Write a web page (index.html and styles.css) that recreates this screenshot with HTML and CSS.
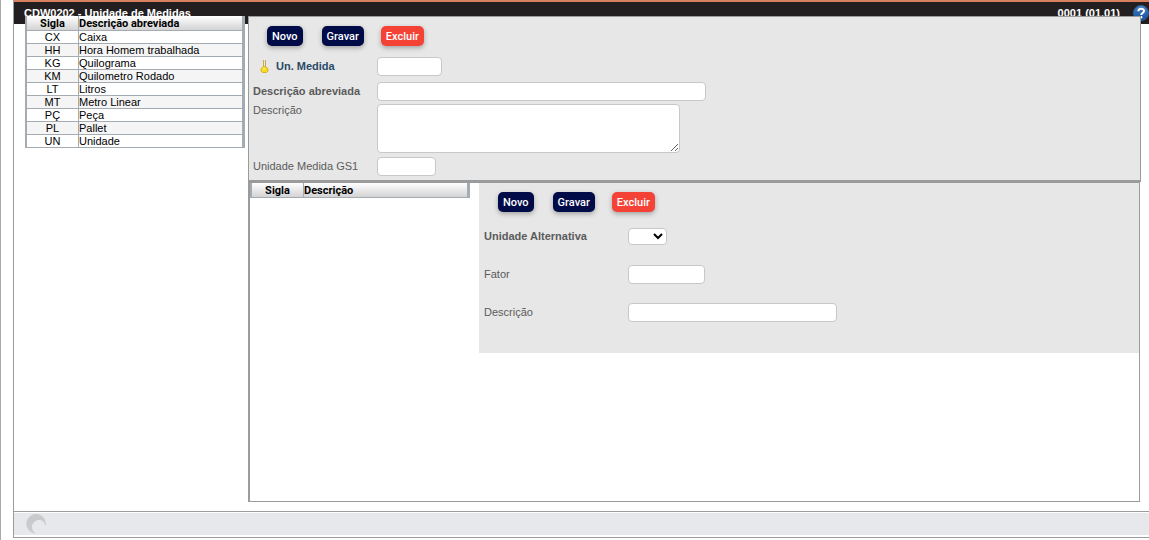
FILE: index.html
```html
<!doctype html>
<html lang="pt-BR">
<head>
  <meta charset="UTF-8">
  <meta name="viewport" content="width=device-width, initial-scale=1.0">
  <title>CDW0202 - Unidade de Medidas</title>
  <link rel="stylesheet" href="styles.css">
</head>
<body>
  <div class="window">
    <header class="titlebar">
      <h1>CDW0202 - Unidade de Medidas</h1>
      <span class="version">0001 (01.01)</span>
      <button type="button" class="help" aria-label="Ajuda">
        <svg width="16" height="16" viewBox="0 0 16 16">
          <defs>
            <linearGradient id="helpfill" x1="0" y1="0" x2="0" y2="1">
              <stop offset="0" stop-color="#4a83c4"/>
              <stop offset="1" stop-color="#0f4c9a"/>
            </linearGradient>
          </defs>
          <circle cx="8" cy="8" r="7.5" fill="url(#helpfill)" stroke="#2c62a3"/>
          <path d="M5.4 6.2C5.2 3 11 2.8 11 6C11 8 8.2 8 8.2 10" fill="none" stroke="#fff" stroke-width="2"/>
          <circle cx="8.2" cy="12.3" r="1.2" fill="#fff"/>
        </svg>
      </button>
    </header>

    <main class="content">
      <table class="grid">
        <thead>
          <tr><th class="sigla">Sigla</th><th>Descrição abreviada</th></tr>
        </thead>
        <tbody>
          <tr><td class="sigla">CX</td><td>Caixa</td></tr>
          <tr><td class="sigla">HH</td><td>Hora Homem trabalhada</td></tr>
          <tr><td class="sigla">KG</td><td>Quilograma</td></tr>
          <tr><td class="sigla">KM</td><td>Quilometro Rodado</td></tr>
          <tr><td class="sigla">LT</td><td>Litros</td></tr>
          <tr><td class="sigla">MT</td><td>Metro Linear</td></tr>
          <tr><td class="sigla">PÇ</td><td>Peça</td></tr>
          <tr><td class="sigla">PL</td><td>Pallet</td></tr>
          <tr><td class="sigla">UN</td><td>Unidade</td></tr>
        </tbody>
      </table>

      <div class="panels">
        <form class="unit-form">
          <div class="buttons">
            <button type="button" class="btn">Novo</button>
            <button type="button" class="btn">Gravar</button>
            <button type="button" class="btn btn-delete">Excluir</button>
          </div>
          <div class="row row-key">
            <label for="un" class="key">
              <svg width="11" height="15" viewBox="0 0 11 15">
                <path d="M4.5 1V8M6.5 1V8" stroke="#c9a94a" stroke-width="1"/>
                <path d="M4 7.5H7L9 10V12L7.5 13.5H3.5L2 12V10Z" fill="#f6dc1e" stroke="#d6b12c"/>
                <path d="M4 10H6" stroke="#fff8a0"/>
              </svg>
              Un. Medida
            </label>
            <input type="text" id="un" class="w-un">
          </div>
          <div class="row row-abbr">
            <label for="abrev" class="required">Descrição abreviada</label>
            <input type="text" id="abrev" class="w-abrev">
          </div>
          <div class="row row-text">
            <label for="desc">Descrição</label>
            <textarea id="desc"></textarea>
          </div>
          <div class="row">
            <label for="gs1">Unidade Medida GS1</label>
            <input type="text" id="gs1" class="w-gs1">
          </div>
        </form>

        <section class="alternatives">
          <table class="grid">
            <thead>
              <tr><th class="sigla">Sigla</th><th>Descrição</th></tr>
            </thead>
          </table>
          <form class="alt-form">
            <div class="buttons">
              <button type="button" class="btn">Novo</button>
              <button type="button" class="btn">Gravar</button>
              <button type="button" class="btn btn-delete">Excluir</button>
            </div>
            <div class="row">
              <label for="alt" class="required">Unidade Alternativa</label>
              <select id="alt"><option></option></select>
            </div>
            <div class="row">
              <label for="fator">Fator</label>
              <input type="text" id="fator" class="w-fator">
            </div>
            <div class="row">
              <label for="altdesc">Descrição</label>
              <input type="text" id="altdesc" class="w-altdesc">
            </div>
          </form>
        </section>
      </div>
    </main>

    <footer class="status">
      <svg width="20" height="20" viewBox="0 0 20 20">
        <path d="M10 19.5A9.7 9.7 0 1 1 19.5 12C18 5.5 12.500 5 9 7.500C4.500 10.500 5 16.500 10 19.500Z" fill="#c9cacc"/>
      </svg>
    </footer>
  </div>
</body>
</html>
```

FILE: styles.css
```css
* {
  box-sizing: border-box;
}
body {
  margin: 0;
  min-height: 100vh;
  display: flex;
  padding: 0 0 2px 12px;
  border-left: 1px solid #aaa;
  background: #fff;
  font-family: "Liberation Sans", Arial, sans-serif;
  font-size: 11px;
  color: #000;
}
.window {
  flex: 1;
  display: flex;
  flex-direction: column;
  border-left: 1px solid #9b9c9d;
  border-bottom: 1px solid #9b9c9d;
}
.titlebar {
  display: flex;
  align-items: center;
  height: 24px;
  padding-left: 10px;
  border-top: 2px solid #d9805f;
  background: #231f20;
  color: #fff;
  font-weight: bold;
}
.titlebar h1 {
  flex: 1;
  margin: 0;
  font-size: 11px;
}
.help {
  display: flex;
  margin-left: 13px;
  padding: 0;
  border: 0;
  background: none;
}
/* the content area rides up over the title bar */
.content {
  position: relative;
  z-index: 1;
  flex: 1;
  display: flex;
  align-items: flex-start;
  gap: 3px;
  margin-top: -8px;
  padding: 0 8px 9px 11px;
}

/* data grids */
.grid {
  flex: none;
  width: 220px;
  table-layout: fixed;
  border-collapse: separate;
  border-spacing: 0;
  border: solid #a5acb1;
  border-width: 0 3px 0 2px;
  background: #fff;
}
.grid th,
.grid td {
  height: 13px;
  padding: 0;
  border-bottom: 1px solid #a5acb1;
  line-height: 12px;
  text-align: left;
}
.grid th {
  height: 15px;
  padding-top: 1px;
  line-height: 13px;
  font-family: Roboto, sans-serif;
  background: linear-gradient(#fff, #d3d3d3);
}
.grid .sigla {
  width: 52px;
  border-right: 1px solid #a5acb1;
  text-align: center;
}
.grid tbody tr:nth-child(even) {
  background: #f5f5f5;
}

/* forms */
.panels {
  flex: 1;
  align-self: stretch;
  display: flex;
  flex-direction: column;
}
.unit-form {
  padding: 9px 4px 4px;
  border: 1px solid #999b9d;
  border-bottom-width: 2px;
  background: #e7e7e7;
}
.buttons {
  display: flex;
  padding-left: 14px;
}
.btn {
  height: 20px;
  margin-right: 19px;
  padding: 0 5px;
  border: 0;
  border-radius: 5px;
  background: #000b48;
  box-shadow: 0 2px 5px rgba(0, 0, 0, 0.3);
  color: #fff;
  font: 500 11px Roboto, Arial, sans-serif;
}
.btn:nth-child(2) {
  margin-right: 17px;
}
.btn-delete {
  background: #f44336;
}
.row {
  display: flex;
  align-items: flex-start;
}
.row label {
  flex: none;
  width: 124px;
  line-height: 19px;
  color: #5b5b5b;
}
.row .required {
  font-weight: bold;
}
.row .key {
  display: flex;
  align-items: center;
  gap: 6px;
  padding-left: 6px;
  color: #2a4a66;
  font-weight: bold;
}
.row-key {
  height: 25px;
  margin-top: 11px;
}
.row-abbr {
  height: 22px;
}
.row-text {
  height: 53px;
}
.row-text label {
  line-height: 13px;
}
input,
textarea,
select {
  height: 19px;
  margin: 0;
  padding: 0 4px;
  border: 1px solid #c8c8c8;
  border-radius: 4px;
  background: #fff;
  font: 11px "Liberation Sans", Arial, sans-serif;
}
textarea {
  width: 303px;
  height: 49px;
}
.w-un {
  width: 65px;
}
.w-abrev {
  width: 329px;
}
.w-gs1 {
  width: 59px;
}
.w-fator {
  width: 77px;
}
.w-altdesc {
  width: 209px;
}

.alternatives {
  flex: 1;
  display: flex;
  align-items: flex-start;
  gap: 9px;
  margin-right: 1px;
  border: solid #999b9d;
  border-width: 1px 1px 1px 2px;
  background: #fff;
}
.alt-form {
  flex: 1;
  padding: 9px 5px 22px;
  background: #e7e7e7;
}
.alt-form .row {
  align-items: center;
  height: 38px;
}
.alt-form .buttons {
  margin-bottom: 5px;
}
.alt-form label {
  width: 144px;
}
select {
  width: 39px;
  height: 17px;
  padding: 0;
}

.status {
  height: 26px;
  padding: 2px 12px;
  border: solid #9b9c9d;
  border-width: 1px 0 0;
  background: #e7e8ec;
  box-shadow: inset 0 1px #fff, inset 0 -2px #fff;
}
```
